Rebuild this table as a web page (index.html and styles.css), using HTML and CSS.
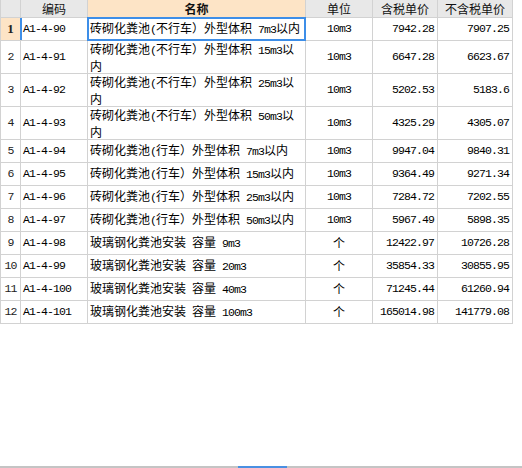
FILE: index.html
```html
<!DOCTYPE html>
<html lang="zh">
<head>
<meta charset="utf-8">
<link rel="stylesheet" href="styles.css">
</head>
<body>
<div class="page">
  <div class="grid">
    <div class="hc"></div>
    <div class="hc">编码</div>
    <div class="hc hn">名称</div>
    <div class="hc">单位</div>
    <div class="hc">含税单价</div>
    <div class="hc">不含税单价</div>

    <div class="rn act">1</div>
    <div class="c code codeact"><span class="a">A1-4-90</span></div>
    <div class="c name sel"><span>砖砌化粪池<span class="a">(</span>不行车）外型体积<span class="a"> 7m3</span>以内</span></div>
    <div class="c unit"><span class="a">10m3</span></div>
    <div class="c num"><span class="a">7942.28</span></div>
    <div class="c num"><span class="a">7907.25</span></div>

    <div class="rn"><span class="a">2</span></div>
    <div class="c code"><span class="a">A1-4-91</span></div>
    <div class="c name"><span class="two">砖砌化粪池<span class="a">(</span>不行车）外型体积<span class="a"> 15m3</span>以<br>内</span></div>
    <div class="c unit"><span class="a">10m3</span></div>
    <div class="c num"><span class="a">6647.28</span></div>
    <div class="c num"><span class="a">6623.67</span></div>

    <div class="rn"><span class="a">3</span></div>
    <div class="c code"><span class="a">A1-4-92</span></div>
    <div class="c name"><span class="two">砖砌化粪池<span class="a">(</span>不行车）外型体积<span class="a"> 25m3</span>以<br>内</span></div>
    <div class="c unit"><span class="a">10m3</span></div>
    <div class="c num"><span class="a">5202.53</span></div>
    <div class="c num"><span class="a">5183.6</span></div>

    <div class="rn"><span class="a">4</span></div>
    <div class="c code"><span class="a">A1-4-93</span></div>
    <div class="c name"><span class="two">砖砌化粪池<span class="a">(</span>不行车）外型体积<span class="a"> 50m3</span>以<br>内</span></div>
    <div class="c unit"><span class="a">10m3</span></div>
    <div class="c num"><span class="a">4325.29</span></div>
    <div class="c num"><span class="a">4305.07</span></div>

    <div class="rn"><span class="a">5</span></div>
    <div class="c code"><span class="a">A1-4-94</span></div>
    <div class="c name"><span>砖砌化粪池<span class="a">(</span>行车）外型体积<span class="a"> 7m3</span>以内</span></div>
    <div class="c unit"><span class="a">10m3</span></div>
    <div class="c num"><span class="a">9947.04</span></div>
    <div class="c num"><span class="a">9840.31</span></div>

    <div class="rn"><span class="a">6</span></div>
    <div class="c code"><span class="a">A1-4-95</span></div>
    <div class="c name"><span>砖砌化粪池<span class="a">(</span>行车）外型体积<span class="a"> 15m3</span>以内</span></div>
    <div class="c unit"><span class="a">10m3</span></div>
    <div class="c num"><span class="a">9364.49</span></div>
    <div class="c num"><span class="a">9271.34</span></div>

    <div class="rn"><span class="a">7</span></div>
    <div class="c code"><span class="a">A1-4-96</span></div>
    <div class="c name"><span>砖砌化粪池<span class="a">(</span>行车）外型体积<span class="a"> 25m3</span>以内</span></div>
    <div class="c unit"><span class="a">10m3</span></div>
    <div class="c num"><span class="a">7284.72</span></div>
    <div class="c num"><span class="a">7202.55</span></div>

    <div class="rn"><span class="a">8</span></div>
    <div class="c code"><span class="a">A1-4-97</span></div>
    <div class="c name"><span>砖砌化粪池<span class="a">(</span>行车）外型体积<span class="a"> 50m3</span>以内</span></div>
    <div class="c unit"><span class="a">10m3</span></div>
    <div class="c num"><span class="a">5967.49</span></div>
    <div class="c num"><span class="a">5898.35</span></div>

    <div class="rn"><span class="a">9</span></div>
    <div class="c code"><span class="a">A1-4-98</span></div>
    <div class="c name"><span>玻璃钢化粪池安装<span class="a"> </span>容量<span class="a"> 9m3</span></span></div>
    <div class="c unit">个</div>
    <div class="c num"><span class="a">12422.97</span></div>
    <div class="c num"><span class="a">10726.28</span></div>

    <div class="rn"><span class="a">10</span></div>
    <div class="c code"><span class="a">A1-4-99</span></div>
    <div class="c name"><span>玻璃钢化粪池安装<span class="a"> </span>容量<span class="a"> 20m3</span></span></div>
    <div class="c unit">个</div>
    <div class="c num"><span class="a">35854.33</span></div>
    <div class="c num"><span class="a">30855.95</span></div>

    <div class="rn"><span class="a">11</span></div>
    <div class="c code"><span class="a">A1-4-100</span></div>
    <div class="c name"><span>玻璃钢化粪池安装<span class="a"> </span>容量<span class="a"> 40m3</span></span></div>
    <div class="c unit">个</div>
    <div class="c num"><span class="a">71245.44</span></div>
    <div class="c num"><span class="a">61260.94</span></div>

    <div class="rn"><span class="a">12</span></div>
    <div class="c code"><span class="a">A1-4-101</span></div>
    <div class="c name"><span>玻璃钢化粪池安装<span class="a"> </span>容量<span class="a"> 100m3</span></span></div>
    <div class="c unit">个</div>
    <div class="c num"><span class="a">165014.98</span></div>
    <div class="c num"><span class="a">141779.08</span></div>
  </div>
  <div class="spacer"></div>
  <div class="scroll"><div class="thumb"></div></div>
</div>
</body>
</html>
```

FILE: styles.css
```css
html, body {
  margin: 0;
  padding: 0;
  background: #ffffff;
}

.page {
  height: 468px;
  display: flex;
  flex-direction: column;
  font-family: "Noto Sans CJK SC", sans-serif;
  font-size: 12px;
  color: #000000;
}

.grid {
  display: grid;
  grid-template-columns: 19px 66px 217px 66px 64px 74px;
  grid-template-rows: 17px 22px 32px 32px 32px repeat(8, 22px);
  gap: 1px;
  width: max-content;
  background: #d2d2d2;
  border-left: 1px solid #d2d2d2;
  border-right: 1px solid #d2d2d2;
  border-bottom: 1px solid #d2d2d2;
}

.grid > div {
  display: flex;
  align-items: center;
  background: #ffffff;
  line-height: 16px;
  white-space: nowrap;
  overflow: hidden;
}

.two {
  line-height: 15px;
}

.a {
  font-family: "Liberation Mono", monospace;
  font-size: 11.5px;
  letter-spacing: -0.9px;
  white-space: pre;
}

.grid > .hc {
  background: #e8e8e8;
  justify-content: center;
  color: #111111;
}

.grid > .hn {
  background: #fde4c6;
  font-weight: bold;
}

.grid > .rn {
  justify-content: center;
  color: #222222;
}

.grid > .act {
  background: #fde4c6;
  font-weight: bold;
  font-family: "Liberation Serif", serif;
  font-size: 13px;
}

.code {
  padding-left: 2px;
}

.codeact {
  box-shadow: -1px 0 0 #3d8ee8, inset 1px 0 0 #3d8ee8;
}

.name {
  padding-left: 2px;
}

.grid > .sel {
  outline: 2px solid #3d8ee8;
  outline-offset: -1px;
}

.unit {
  justify-content: center;
}

.grid > .num {
  justify-content: flex-end;
  padding-right: 3px;
}

.spacer {
  flex: 1;
}

.scroll {
  height: 2px;
  background: #c4c4c4;
  display: flex;
  padding-left: 238px;
}

.thumb {
  width: 49px;
  background: #4a90e2;
}
```
